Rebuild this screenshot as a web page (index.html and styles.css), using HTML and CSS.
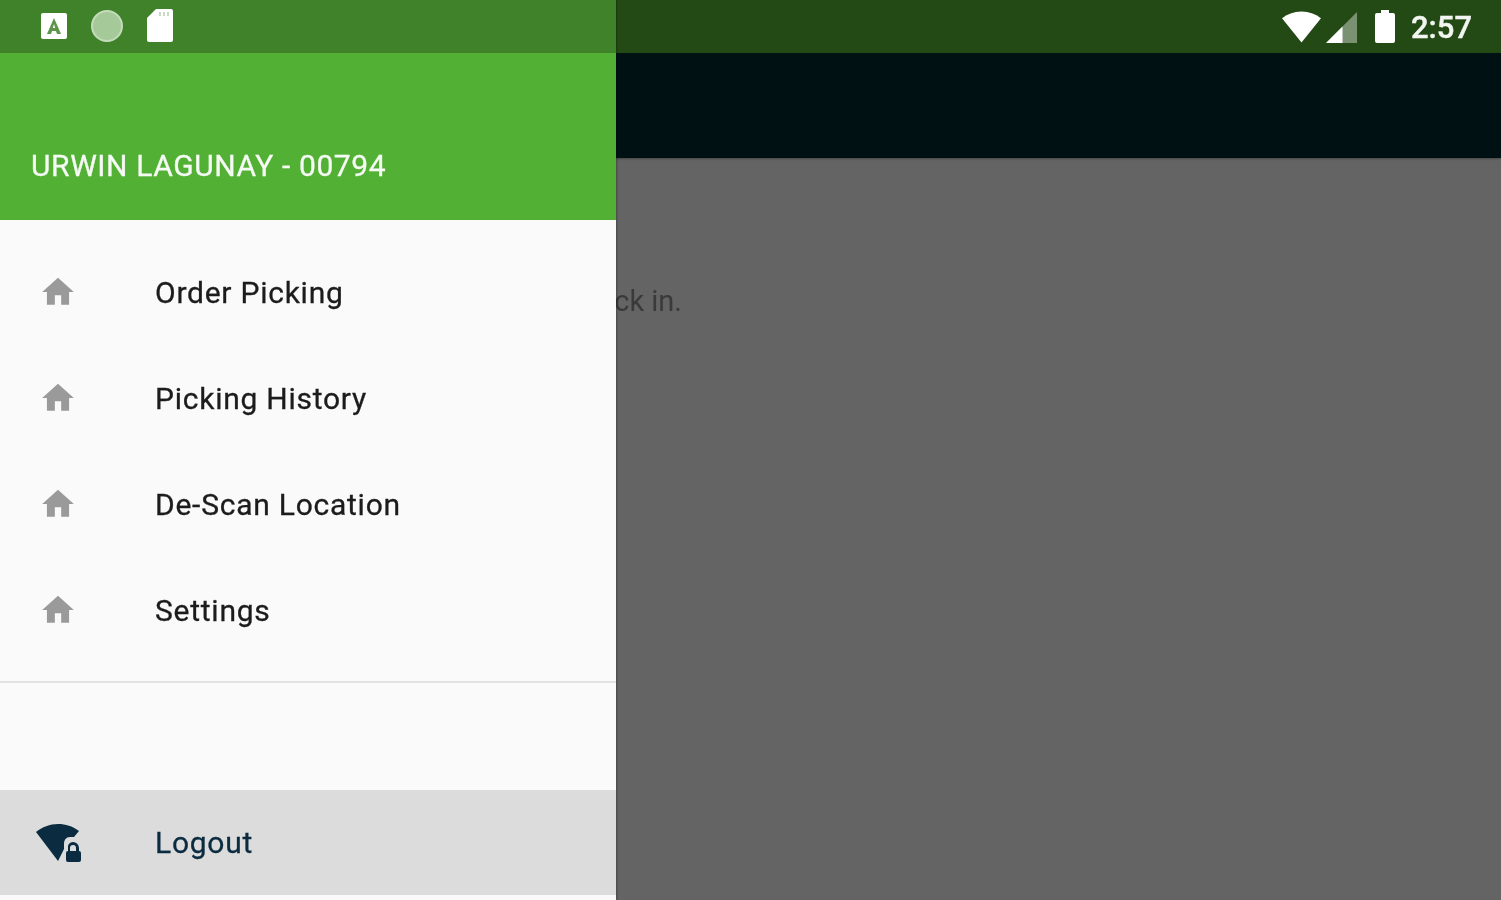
FILE: index.html
```html
<!DOCTYPE html>
<html lang="en">
<head>
    <meta charset="UTF-8">
    <title>Order Picking</title>
    <link rel="stylesheet" href="styles.css">
</head>
<body>
    <div class="app">
        <!-- screen behind the drawer, dimmed -->
        <div class="main">
            <div class="status-bar">
                <svg class="status-wifi" viewBox="0 0 40 32"><path d="M0 7C5 3 12 0 20 0s15 3 20 7L20 32z"/></svg>
                <svg class="status-signal" viewBox="0 0 32 32"><path class="signal-empty" d="M32 0v32H0z"/><path d="M17 15v17H0z"/></svg>
                <svg class="status-battery" viewBox="0 0 20 33"><path d="M6 0h8v3h4a2 2 0 0 1 2 2v26a2 2 0 0 1-2 2H2a2 2 0 0 1-2-2V5a2 2 0 0 1 2-2h4z"/></svg>
                <span class="status-time">2:57</span>
            </div>
            <div class="toolbar"></div>
            <div class="content">
                <p class="message">Please check in.</p>
            </div>
        </div>

        <div class="drawer">
            <div class="drawer-status">
                <svg class="notif-a" viewBox="0 0 26 26"><rect width="26" height="26" rx="2" fill="#fff"/><path d="M13 5l7 16h-4l-1-3h-4l-1 3H6zm0 6l-1.2 4h2.4z" fill="#5c9449"/></svg>
                <svg class="notif-circle" viewBox="0 0 32 32"><circle cx="16" cy="16" r="15" fill="#a6c99a" stroke="#c4dcbc" stroke-width="2"/></svg>
                <svg class="notif-sd" viewBox="0 0 26 33"><path d="M9 0h15a2 2 0 0 1 2 2v29a2 2 0 0 1-2 2H2a2 2 0 0 1-2-2V9z" fill="#fff"/><path d="M12 3h2v4h-2zm4 0h2v4h-2zm4 0h2v4h-2z" fill="#c9d9c3"/></svg>
            </div>
            <div class="drawer-header"><span class="header-name">URWIN LAGUNAY - 00794</span></div>
            <ul class="menu">
                <li class="menu-item">
                    <svg class="home-icon" viewBox="0 0 24 24"><path d="M10 20v-6h4v6h5v-8h3L12 3 2 12h3v8z"/></svg>
                    <span>Order Picking</span>
                </li>
                <li class="menu-item">
                    <svg class="home-icon" viewBox="0 0 24 24"><path d="M10 20v-6h4v6h5v-8h3L12 3 2 12h3v8z"/></svg>
                    <span>Picking History</span>
                </li>
                <li class="menu-item">
                    <svg class="home-icon" viewBox="0 0 24 24"><path d="M10 20v-6h4v6h5v-8h3L12 3 2 12h3v8z"/></svg>
                    <span>De-Scan Location</span>
                </li>
                <li class="menu-item">
                    <svg class="home-icon" viewBox="0 0 24 24"><path d="M10 20v-6h4v6h5v-8h3L12 3 2 12h3v8z"/></svg>
                    <span>Settings</span>
                </li>
            </ul>
            <div class="divider"></div>
            <div class="menu-item logout">
                <svg class="logout-icon" viewBox="0 0 48 38"><path d="M1 8C7 3 15 0 23 0s14 2 21 7l-5 6h-4c-4 0-6 3-6 7v5l-6 12z"/><path d="M38 18a6 6 0 0 1 6 6v3a2 2 0 0 1 2 2v7a2 2 0 0 1-2 2H33a2 2 0 0 1-2-2v-7a2 2 0 0 1 2-2v-3a5 5 0 0 1 5-6zm0 3a3 3 0 0 0-3 3v3h6v-3a3 3 0 0 0-3-3z" fill-rule="evenodd"/></svg>
                <span>Logout</span>
            </div>
        </div>
    </div>
</body>
</html>
```

FILE: styles.css
```css
* {
    box-sizing: border-box;
}
html, body {
    margin: 0;
    padding: 0;
}
body {
    width: 1501px;
    height: 900px;
    overflow: hidden;
    font-family: Roboto, "Liberation Sans", sans-serif;
    background-color: #646464;
}
.app {
    position: relative;
    height: 900px;
    overflow: hidden;
}
/* the reference is an upscaled capture, so text and icons are soft */
svg, .status-time, .message, .header-name, .menu-item span {
    filter: blur(0.7px);
}
.main {
    display: flex;
    flex-direction: column;
    height: 100%;
}
.status-bar {
    height: 53px;
    background-color: #234a14;
    display: flex;
    align-items: center;
    justify-content: flex-end;
    padding-right: 29px;
}
.status-bar svg {
    fill: #fff;
    display: block;
}
.status-wifi {
    width: 39px;
    height: 32px;
}
.status-signal {
    width: 31px;
    height: 31px;
    margin-left: 5px;
    margin-top: 2px;
}
.signal-empty {
    opacity: 0.4;
}
.status-battery {
    width: 20px;
    height: 33px;
    margin-left: 18px;
}
.status-time {
    margin: 2px 0 0 16px;
    font-size: 31px;
    font-weight: 500;
    color: #f2f5f0;
    -webkit-text-stroke: 0.4px #f2f5f0;
}
.toolbar {
    height: 105px;
    background-color: #001114;
    box-shadow: 0 1px 2px rgba(0,0,0,0.3);
}
.content {
    flex: 1;
    padding-top: 125px;
}
.message {
    width: 682px;
    margin: 0;
    font-size: 29px;
    line-height: 36px;
    text-align: right;
    color: #3a3a3a;
}
.drawer {
    position: absolute;
    top: 0;
    left: 0;
    bottom: 0;
    width: 616px;
    background-color: #fafafa;
    display: flex;
    flex-direction: column;
    box-shadow: 1px 0 2px rgba(0,0,0,0.3);
}
.drawer-status {
    height: 53px;
    background-color: #3f8229;
    display: flex;
    align-items: center;
    padding: 0 0 2px 41px;
}
.drawer-status svg {
    display: block;
}
.notif-a {
    width: 26px;
    height: 26px;
}
.notif-circle {
    width: 32px;
    height: 32px;
    margin-left: 24px;
}
.notif-sd {
    width: 26px;
    height: 33px;
    margin-left: 24px;
}
.drawer-header {
    height: 167px;
    background-color: #52b035;
    padding: 94px 0 0 31px;
    font-size: 30px;
    line-height: 38px;
    letter-spacing: 0.6px;
    color: #f6faf4;
}
.header-name {
    display: block;
    -webkit-text-stroke: 0.3px #f6faf4;
}
.menu {
    list-style: none;
    margin: 0;
    padding: 19px 0 18px;
}
.menu-item {
    height: 106px;
    display: flex;
    align-items: center;
    font-size: 30px;
    letter-spacing: 0.75px;
    color: #1c1c1c;
}
.menu-item span {
    margin-left: 78px;
    -webkit-text-stroke: 0.3px #1c1c1c;
}
.home-icon {
    width: 38px;
    height: 38px;
    margin-left: 39px;
    fill: #9a9a9a;
    flex: none;
}
.divider {
    height: 2px;
    background-color: #e2e2e2;
}
.logout {
    margin-top: 107px;
    height: 105px;
    background-color: #dcdcdc;
    color: #0b2b40;
}
.logout-icon {
    width: 48px;
    height: 38px;
    margin-left: 35px;
    fill: #0b2b40;
    flex: none;
}
.logout span {
    margin-left: 72px;
    -webkit-text-stroke: 0.3px #0b2b40;
}
```
